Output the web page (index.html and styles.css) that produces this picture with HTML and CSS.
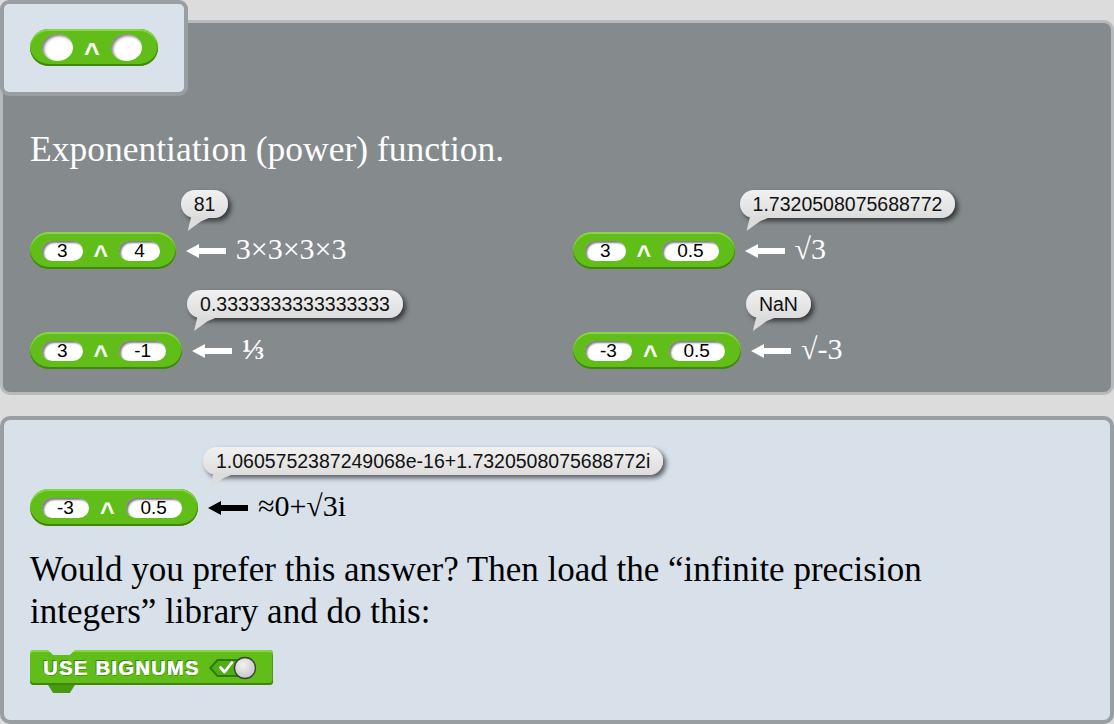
FILE: index.html
```html
<!DOCTYPE html>
<html>
<head>
<meta charset="utf-8">
<link rel="stylesheet" href="styles.css">
</head>
<body>
<div class="page">
  <div class="tab">
    <div class="block big"><span class="slot empty"></span><span class="op">^</span><span class="slot empty"></span></div>
  </div>

  <section class="panel dark">
    <h1 class="title">Exponentiation (power) function.</h1>
    <div class="examples">
      <div class="example">
        <div class="bubble">81</div>
        <div class="block"><span class="slot">3</span><span class="op">^</span><span class="slot">4</span></div>
        <div class="result">
          <svg class="arrow" viewBox="0 0 40 14"><polygon points="0,7 13,0 13,4 40,4 40,10 13,10 13,14"/></svg>
          <span class="math">3×3×3×3</span>
        </div>
      </div>
      <div class="example">
        <div class="bubble">1.7320508075688772</div>
        <div class="block"><span class="slot">3</span><span class="op">^</span><span class="slot">0.5</span></div>
        <div class="result">
          <svg class="arrow" viewBox="0 0 40 14"><polygon points="0,7 13,0 13,4 40,4 40,10 13,10 13,14"/></svg>
          <span class="math">√3</span>
        </div>
      </div>
      <div class="example">
        <div class="bubble">0.3333333333333333</div>
        <div class="block"><span class="slot">3</span><span class="op">^</span><span class="slot">-1</span></div>
        <div class="result">
          <svg class="arrow" viewBox="0 0 40 14"><polygon points="0,7 13,0 13,4 40,4 40,10 13,10 13,14"/></svg>
          <span class="math frac">⅓</span>
        </div>
      </div>
      <div class="example">
        <div class="bubble">NaN</div>
        <div class="block"><span class="slot">-3</span><span class="op">^</span><span class="slot">0.5</span></div>
        <div class="result">
          <svg class="arrow" viewBox="0 0 40 14"><polygon points="0,7 13,0 13,4 40,4 40,10 13,10 13,14"/></svg>
          <span class="math">√-3</span>
        </div>
      </div>
    </div>
  </section>

  <section class="panel light">
    <div class="example">
      <div class="bubble">1.0605752387249068e-16+1.7320508075688772i</div>
      <div class="block"><span class="slot">-3</span><span class="op">^</span><span class="slot">0.5</span></div>
      <div class="result">
        <svg class="arrow black" viewBox="0 0 40 14"><polygon points="0,7 13,0 13,4 40,4 40,10 13,10 13,14"/></svg>
        <span class="math black">≈0+√3i</span>
      </div>
    </div>
    <p class="para">Would you prefer this answer? Then load the “infinite precision integers” library and do this:</p>
    <div class="cmd">
      <span class="cmd-label">USE BIGNUMS</span>
      <svg class="toggle" viewBox="0 0 48 24">
        <defs>
          <radialGradient id="knob" cx="40%" cy="35%" r="70%">
            <stop offset="0" stop-color="#f2f2f2"/>
            <stop offset="1" stop-color="#c4c4c4"/>
          </radialGradient>
        </defs>
        <polygon points="0,12 8,3 37,3 37,21 8,21" fill="#2f7a06"/>
        <polygon points="2.5,12 9,5 37,5 37,19 9,19" fill="#4fae12"/>
        <path d="M11.5,11.5 L15.5,16 L23,6.5" fill="none" stroke="#fff" stroke-width="2.8" stroke-linecap="round" stroke-linejoin="round"/>
        <circle cx="36" cy="12" r="10.5" fill="url(#knob)" stroke="#3c3c3c" stroke-width="1.3"/>
      </svg>
    </div>
  </section>
</div>
</body>
</html>
```

FILE: styles.css
```css
html, body {
  margin: 0;
  padding: 0;
}

body {
  background: #dcdcdc;
  width: 1114px;
  height: 724px;
  overflow: hidden;
  font-family: "Liberation Serif", "Times New Roman", serif;
}

.page {
  position: relative;
  padding-top: 20px;
  display: flex;
  flex-direction: column;
  gap: 21px;
}

/* floating tab overlapping the top-left of the dark panel */
.tab {
  position: absolute;
  left: 0;
  top: 0;
  z-index: 2;
  width: 188px;
  height: 96px;
  box-sizing: border-box;
  border: 4px solid #9a9ea2;
  border-radius: 9px;
  background: #d9e1ea;
  padding: 25px 0 0 26px;
}

.panel {
  box-sizing: border-box;
  width: 1114px;
  border-radius: 10px;
}

.panel.dark {
  height: 375px;
  border: 3px solid #b6babd;
  background: #858a8d;
  padding: 105px 0 0 27px;
  color: #fff;
}

.panel.light {
  height: 308px;
  border: 4px solid #999ea2;
  background: #d8e0ea;
  padding: 27px 0 0 26px;
  color: #000;
}

.title {
  margin: 0;
  font-weight: normal;
  font-size: 35.5px;
  line-height: 42px;
}

.examples {
  margin-top: 20px;
  display: grid;
  grid-template-columns: 543px 1fr;
  row-gap: 20px;
}

.example {
  display: grid;
  grid-template-columns: auto 1fr;
  align-items: center;
}

/* speech bubble */
.bubble {
  grid-column: 2;
  grid-row: 1;
  justify-self: start;
  position: relative;
  margin: 0 0 13px 5px;
  height: 28px;
  line-height: 28px;
  padding: 0 13px;
  border-radius: 14px;
  background: linear-gradient(#f1f1f1, #dddddd);
  color: #111;
  font-family: "Liberation Sans", Arial, sans-serif;
  font-size: 19.5px;
  white-space: nowrap;
  box-shadow: 3px 3px 5px rgba(0, 0, 0, 0.6);
}

.bubble::after {
  content: "";
  position: absolute;
  left: 5px;
  top: calc(100% - 2px);
  width: 28px;
  height: 15px;
  background: #dcdcdc;
  clip-path: polygon(20% 0, 100% 0, 55% 35%, 7% 100%, 14% 45%);
}

/* reporter block */
.block {
  grid-column: 1;
  grid-row: 2;
  display: inline-flex;
  align-items: center;
  gap: 12px;
  height: 37px;
  box-sizing: border-box;
  padding: 0 16px 0 12px;
  border-radius: 18.5px;
  background: #61bd18;
  box-shadow:
    inset 0 2px 0 #86d447,
    inset 0 -2px 0 #3f860b,
    inset -1px 0 0 #4c9a10;
}

.slot {
  height: 20px;
  line-height: 20px;
  padding: 0 15px;
  border-radius: 10px;
  background: #fff;
  color: #000;
  font-family: "Liberation Sans", Arial, sans-serif;
  font-size: 19px;
  box-shadow: inset 2px 2px 2px rgba(0, 0, 0, 0.5);
}

.op {
  color: #fff;
  font-family: "Liberation Sans", Arial, sans-serif;
  font-weight: bold;
  font-size: 25px;
  line-height: 25px;
  padding-top: 10px;
  margin: 0 -1px;
}

.block.big {
  gap: 11px;
}

.block.big .slot.empty {
  width: 31px;
  height: 27px;
  padding: 0;
  border-radius: 50%;
  box-shadow: inset 2px 2px 3px rgba(0, 0, 0, 0.5);
}

.block.big .op {
  font-size: 27px;
  line-height: 27px;
  padding-top: 11px;
  margin: 0;
}

.result {
  grid-column: 2;
  grid-row: 2;
  display: flex;
  align-items: center;
  gap: 10px;
  margin-left: 10px;
}

.arrow {
  width: 40px;
  height: 14px;
  fill: #fff;
}

.arrow.black {
  fill: #000;
}

.math {
  font-size: 30px;
  line-height: 36px;
  color: #fff;
  padding-bottom: 3px;
}

.math.frac {
  font-weight: bold;
}

.math.black {
  color: #000;
}

.para {
  margin: 22px 0 0 0;
  max-width: 1000px;
  font-size: 35px;
  line-height: 42px;
}

/* command block */
.cmd {
  position: relative;
  margin-top: 17px;
  width: 243px;
  height: 35px;
  box-sizing: border-box;
  display: flex;
  align-items: center;
  gap: 9px;
  padding-left: 13px;
  border-radius: 4px;
  background: #61bd18;
  box-shadow:
    inset 0 2px 0 #86d447,
    inset 0 -2px 0 #3f860b,
    inset -1px 0 0 #4c9a10;
}

.cmd::before {
  content: "";
  position: absolute;
  left: 18px;
  top: 0;
  width: 27px;
  height: 5px;
  background: #d8e0ea;
  clip-path: polygon(0 0, 100% 0, 81% 100%, 19% 100%);
}

.cmd::after {
  content: "";
  position: absolute;
  left: 18px;
  top: 100%;
  width: 27px;
  height: 8px;
  background: #4a9711;
  clip-path: polygon(0 0, 100% 0, 81% 100%, 19% 100%);
}

.cmd-label {
  color: #fff;
  font-family: "Liberation Sans", Arial, sans-serif;
  font-weight: bold;
  font-size: 20px;
  letter-spacing: 1.4px;
  line-height: 24px;
  text-shadow: 0.6px 0 0 #fff, -1px -1px 0 rgba(20, 70, 0, 0.5), 1px 1px 0 rgba(20, 70, 0, 0.35);
}

.toggle {
  width: 48px;
  height: 24px;
}
```
